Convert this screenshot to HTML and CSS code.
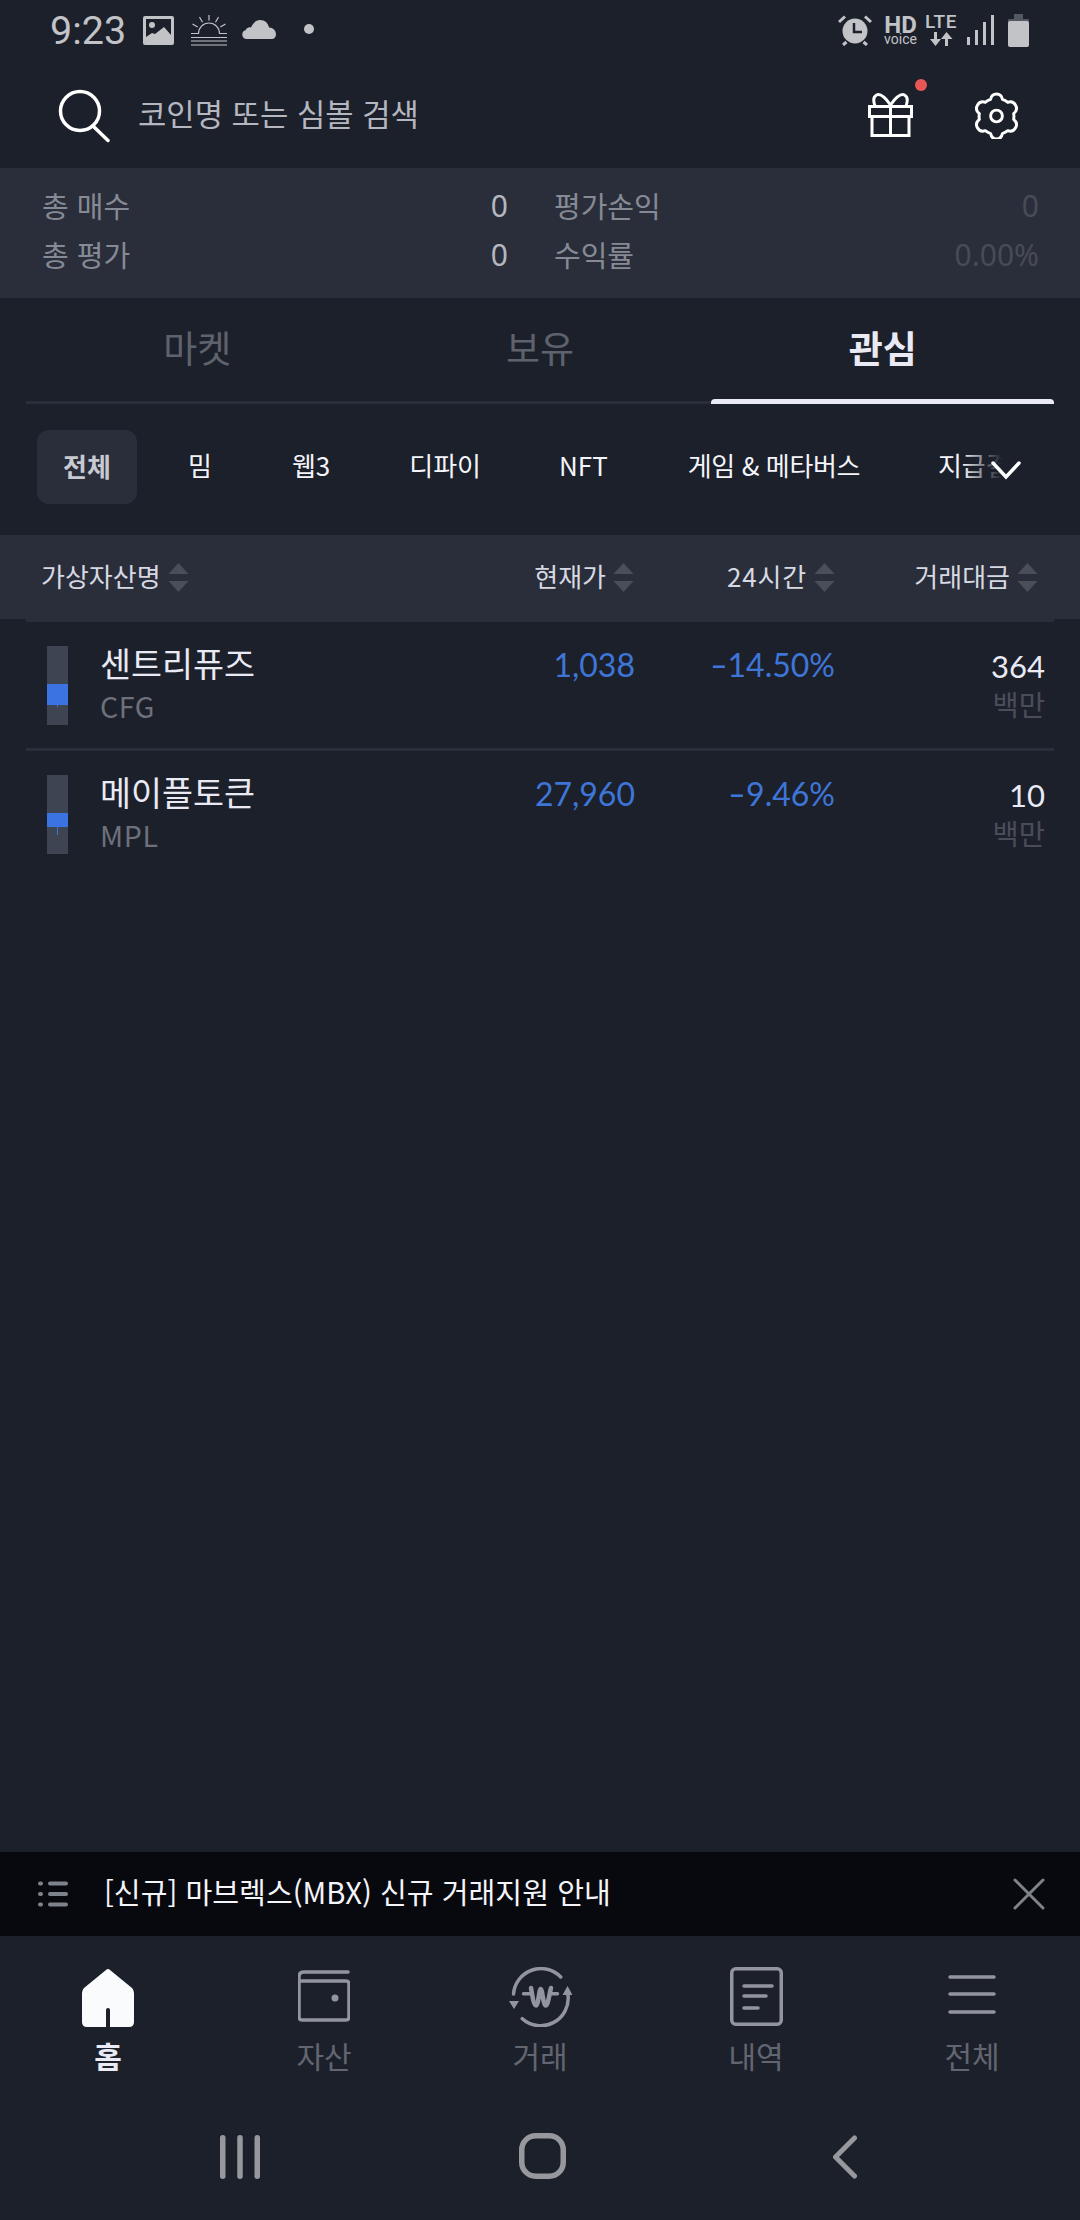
FILE: index.html
```html
<!DOCTYPE html>
<html lang="ko">
<head>
<meta charset="utf-8">
<title>관심</title>
<link rel="stylesheet" href="styles.css">
</head>
<body>
<div class="app">
  <div class="status">
    <span class="time">9:23</span>
    <svg class="st-img" viewBox="0 0 31 29"><rect width="31" height="29" rx="2" fill="#c2c3c7"/><rect x="3" y="3" width="25" height="23" fill="#1c202b"/><circle cx="9" cy="9" r="3" fill="#c2c3c7"/><path d="M3 21l6-4 3 1 9-7 7 8v7H3z" fill="#c2c3c7"/></svg>
    <svg class="st-sun" viewBox="0 0 36 31" stroke="#c2c3c7" stroke-width="1.200" fill="none"><path d="M0 18.500h7.500A10.500 10.500 0 0 1 28.500 18.500H36M18 5.500V0M11.500 7.200 8.500 2M24.500 7.200 27.500 2M6.700 12 1.500 9M29.300 12 34.500 9M0 22.500h36M0 26h36M0 30h36"/></svg>
    <svg class="st-cloud" viewBox="0 0 34 19"><path d="M4.500 19A4.500 4.500 0 0 1 3.500 10.200C5 7.500 7 7 9 7.500 11 3 14 0 18 0c5 0 8 3 9 7.500 4 0 7 3 7 7 0 2.500-2 4.500-4 4.500z" fill="#c2c3c7"/></svg>
    <span class="st-dot"></span>
    <span class="spacer"></span>
    <svg class="st-alarm" viewBox="0 0 34 31"><circle cx="17" cy="16" r="12.500" fill="#c2c3c7"/><path d="M16 8v9h8" fill="none" stroke="#1c202b" stroke-width="2.500"/><path d="M1 7 7 1.500M33 7l-6-5.500M5 30l3.500-3M29 30l-3.500-3" stroke="#c2c3c7" stroke-width="3"/></svg>
    <span class="st-hd"><b>HD</b><i>voice</i></span>
    <span class="st-lte"><b>LTE</b>
      <svg viewBox="0 0 24 14" width="24" height="14" fill="#c2c3c7"><path d="M5 0h3v7h4l-5.500 7L1 7h4zM17.500 0l6 7h-4.500v7h-3V7h-4z"/></svg>
    </span>
    <svg class="st-sig" viewBox="0 0 27 30" fill="#c2c3c7"><rect x="0" y="22" width="3" height="8"/><rect x="8" y="15" width="3" height="15"/><rect x="16" y="7" width="3" height="23"/><rect x="24" y="0" width="3" height="30"/></svg>
    <svg class="st-bat" viewBox="0 0 21 33"><rect x="6" width="9" height="6" fill="#555862"/><rect y="5" width="21" height="3" rx="1" fill="#555862"/><rect y="7" width="21" height="26" rx="2" fill="#c2c3c7"/></svg>
  </div>

  <header class="search">
    <svg class="i-search" viewBox="0 0 52 54" fill="none" stroke="#fff" stroke-width="3.500" stroke-linecap="round"><circle cx="22" cy="22" r="19.500"/><path d="M35 37l15 14.500"/></svg>
    <span class="search-text">코인명 또는 심볼 검색</span>
    <span class="gift-wrap">
      <svg class="i-gift" viewBox="0 0 45 44" fill="none" stroke="#fff" stroke-width="3"><path d="M1.500 13.500h42v10H1.500zM4 23.500v19h37v-19M22.500 13.500v29M22.500 12C19 7 13 0 8.500 2 5 4 5.500 9 7 13M22.500 12c3.500-5 9.500-12 14-10 3.500 2 3 7 1.500 11"/></svg>
      <span class="red-dot"></span>
    </span>
    <svg class="i-gear" viewBox="0 0 44 48" fill="none" stroke="#fff" stroke-width="3" stroke-linejoin="round"><path d="M22 2c3.500 0 5.500 2.500 6 5.500 3 1 3 1 5.500 3 3-1 6-.5 8 3s.5 6.500-2 8.500c.5 2.500.5 3.500 0 6 2.500 2 4 5 2 8.500s-5 4-8 3c-2.500 2-2.500 2-5.500 3-.5 3-2.500 5.500-6 5.500s-5.500-2.500-6-5.500c-3-1-3-1-5.500-3-3 1-6 .5-8-3s-.5-6.500 2-8.500c-.5-2.500-.5-3.500 0-6-2.500-2-4-5-2-8.500s5-4 8-3c2.500-2 2.500-2 5.500-3C16.500 4.500 18.500 2 22 2z"/><circle cx="22" cy="24.500" r="6"/></svg>
  </header>

  <section class="summary">
    <div class="sum-col sum-left">
      <div class="sum-row"><span class="sum-label">총 매수</span><span class="sum-val">0</span></div>
      <div class="sum-row"><span class="sum-label">총 평가</span><span class="sum-val">0</span></div>
    </div>
    <div class="sum-col sum-right">
      <div class="sum-row"><span class="sum-label">평가손익</span><span class="sum-val dim">0</span></div>
      <div class="sum-row"><span class="sum-label">수익률</span><span class="sum-val dim">0.00%</span></div>
    </div>
  </section>

  <nav class="tabs">
    <span class="tab">마켓</span>
    <span class="tab">보유</span>
    <span class="tab on">관심</span>
  </nav>

  <div class="chips">
    <span class="chip on">전체</span>
    <span class="chip c-mim">밈</span>
    <span class="chip c-web">웹3</span>
    <span class="chip c-defi">디파이</span>
    <span class="chip c-nft">NFT</span>
    <span class="chip c-game">게임 &amp; 메타버스</span>
    <span class="chip c-pay">지급결제</span>
    <span class="chip-fade"></span>
    <svg class="chev" viewBox="0 0 30 20" fill="none" stroke="#fff" stroke-width="3.500" stroke-linecap="round"><path d="M2 3l13 14L28 3"/></svg>
  </div>

  <div class="thead">
    <span class="th th-name">가상자산명<svg class="sort" viewBox="0 0 20 29"><path d="M10 0l10 11H0zM10 29L0 18h20z"/></svg></span>
    <span class="th th-price">현재가<svg class="sort" viewBox="0 0 20 29"><path d="M10 0l10 11H0zM10 29L0 18h20z"/></svg></span>
    <span class="th th-chg">24시간<svg class="sort" viewBox="0 0 20 29"><path d="M10 0l10 11H0zM10 29L0 18h20z"/></svg></span>
    <span class="th th-vol">거래대금<svg class="sort" viewBox="0 0 20 29"><path d="M10 0l10 11H0zM10 29L0 18h20z"/></svg></span>
  </div>

  <div class="list">
    <div class="row">
      <div class="candle"><span class="body b1"></span><span class="wick w1"></span></div>
      <div class="coin"><div class="coin-name">센트리퓨즈</div><div class="coin-sym">CFG</div></div>
      <div class="num price">1,038</div>
      <div class="num chg"><span class="minus">-</span>14.50%</div>
      <div class="vol"><div class="vol-n">364</div><div class="vol-u">백만</div></div>
    </div>
    <div class="row last">
      <div class="candle"><span class="body b2"></span><span class="wick w2"></span></div>
      <div class="coin"><div class="coin-name">메이플토큰</div><div class="coin-sym">MPL</div></div>
      <div class="num price">27,960</div>
      <div class="num chg"><span class="minus">-</span>9.46%</div>
      <div class="vol"><div class="vol-n">10</div><div class="vol-u">백만</div></div>
    </div>
  </div>

  <div class="notice">
    <svg class="i-list" viewBox="0 0 30 26" stroke="#7e828b" stroke-width="4" stroke-linecap="round"><path d="M2 2.500h1M2 13h1M2 23.500h1M12 2.500h16M12 13h16M12 23.500h16"/></svg>
    <span class="notice-text">[신규] 마브렉스(MBX) 신규 거래지원 안내</span>
    <svg class="i-x" viewBox="0 0 32 32" stroke="#7e828b" stroke-width="3" stroke-linecap="round"><path d="M2 2l28 28M30 2L2 30"/></svg>
  </div>

  <nav class="bottom">
    <div class="nav on">
      <svg viewBox="0 0 52 58"><path d="M26 0Q27 0 28 1L50 19Q52 21 52 24V53Q52 58 47 58H28V41Q28 39 26 39Q24 39 24 41V58H5Q0 58 0 53V24Q0 21 2 19L24 1Q25 0 26 0Z" fill="#fafbfd"/></svg>
      <span>홈</span>
    </div>
    <div class="nav">
      <svg viewBox="0 0 52 58" fill="none" stroke="#92959f" stroke-width="3.500" stroke-linejoin="round" stroke-linecap="round"><path d="M50 3H6Q1 3 1 8V12M1 12h47q3 0 3 3v33q0 3-3 3H4q-3 0-3-3z"/><circle cx="37" cy="29" r="3.500" fill="#92959f" stroke="none"/></svg>
      <span>자산</span>
    </div>
    <div class="nav n-trade">
      <svg viewBox="0 0 63 60" fill="none" stroke="#92959f" stroke-width="3.500" stroke-linejoin="round" stroke-linecap="round"><path d="M51.700 10A27.500 27.500 0 0 0 4.500 27M13.300 51.700A27.500 27.500 0 0 0 59 28"/><path d="M5 42 0 34h10zM58.500 19l5 9h-10z" fill="#92959f" stroke="none"/><path d="M14.500 26.700h8M41 26.700h7.500" stroke-width="3.500"/><path d="M22 21c1 5 2.500 17.500 5 17.500S30 22 31.700 22s2.500 16.500 5 16.500S40.500 26 42 21" stroke-width="4.500"/></svg>
      <span>거래</span>
    </div>
    <div class="nav n-hist">
      <svg viewBox="0 0 53 59" fill="none" stroke="#92959f" stroke-width="3.500" stroke-linecap="round"><rect x="1.750" y="1.750" width="49.500" height="55.500" rx="4"/><path d="M14 19h28M14 29h22M14 41h14"/></svg>
      <span>내역</span>
    </div>
    <div class="nav">
      <svg viewBox="0 0 52 58" fill="none" stroke="#92959f" stroke-width="3.500" stroke-linecap="round"><path d="M4 8h44M4 25h44M4 43h44"/></svg>
      <span>전체</span>
    </div>
  </nav>

  <div class="sysbar">
    <svg class="sys-recent" viewBox="0 0 40 44" fill="#97989d"><rect width="5.500" height="44" rx="2.700" x="0"/><rect width="5.500" height="44" rx="2.700" x="17.250"/><rect width="5.500" height="44" rx="2.700" x="34.500"/></svg>
    <svg class="sys-home" viewBox="0 0 47 46" fill="none" stroke="#97989d" stroke-width="5.500"><rect x="2.750" y="2.750" width="41.500" height="40.500" rx="14"/></svg>
    <svg class="sys-back" viewBox="0 0 24 44" fill="none" stroke="#97989d" stroke-width="5" stroke-linecap="round" stroke-linejoin="round"><path d="M21.500 3 2.500 22l19 19"/></svg>
  </div>
</div>
</body>
</html>
```

FILE: styles.css
```css
* { box-sizing: border-box; }
html, body { margin: 0; padding: 0; background: #1c202b; }
body { font-family: "Noto Sans CJK KR", "Noto Sans", sans-serif; }
.app { width: 1080px; height: 2220px; display: flex; flex-direction: column; overflow: hidden; color: #fff; background: #1c202b; }

/* status */
.status { height: 58px; flex: none; display: flex; align-items: center; padding: 0 51px 0 50px; }
.status svg { display: block; flex: none; }
.time { font-family: Roboto, sans-serif; font-size: 39.500px; color: #c2c3c7; width: 93px; line-height: 1; margin-top: 3px; flex: none; }
.st-img { width: 31px; height: 29px; margin-top: 3px; }
.st-sun { width: 36px; height: 31px; margin-left: 17px; margin-top: 3px; }
.st-cloud { width: 34px; height: 19px; margin-left: 15px; margin-top: 1px; }
.st-dot { width: 10px; height: 10px; border-radius: 50%; background: #c2c3c7; margin-left: 28px; }
.spacer { flex: 1; }
.st-alarm { width: 34px; height: 31px; margin-top: 3px; }
.st-hd { width: 33px; margin-left: 12px; display: flex; flex-direction: column; align-items: center; color: #c2c3c7; font-family: Roboto, sans-serif; margin-top: 3px; flex: none; }
.st-hd b { font-size: 24px; line-height: 17px; }
.st-hd i { font-style: normal; font-size: 14px; line-height: 11px; }
.st-lte { width: 30px; margin-left: 9px; display: flex; flex-direction: column; align-items: center; gap: 3px; color: #c2c3c7; font-family: Roboto, sans-serif; margin-top: 2px; flex: none; }
.st-lte b { font-size: 19px; font-weight: 500; line-height: 15px; letter-spacing: .6px; }
.st-sig { width: 27px; height: 30px; margin-left: 11px; margin-top: 2px; }
.st-bat { width: 21px; height: 33px; margin-left: 14px; margin-top: 3px; }

/* search */
.search { height: 110px; flex: none; display: flex; align-items: center; padding: 0 61px 0 58px; }
.i-search { width: 52px; height: 54px; flex: none; margin-top: 6px; }
.search-text { font-size: 30.800px; color: #b4b7c0; margin-left: 28px; flex: 1; line-height: 1; }
.gift-wrap { position: relative; width: 45px; height: 44px; margin-top: 4px; flex: none; }
.i-gift { width: 45px; height: 44px; display: block; }
.red-dot { position: absolute; left: 47px; top: -14px; width: 12px; height: 12px; border-radius: 50%; background: #e85656; }
.i-gear { width: 45px; height: 47px; margin-left: 61px; flex: none; margin-top: 4px; }

/* summary */
.summary { height: 130px; flex: none; background: #2a2e3a; display: flex; padding: 13px 41px 0 42px; }
.sum-col { display: flex; flex-direction: column; }
.sum-left { width: 466px; }
.sum-right { flex: 1; padding-left: 46px; }
.sum-row { display: flex; justify-content: space-between; align-items: center; height: 49px; font-size: 29px; line-height: 1; }
.sum-label { color: #868a95; }
.sum-val { font-family: "Noto Sans", sans-serif; color: #b4b7c0; font-size: 30px; }
.sum-val.dim { color: #474b56; }

/* tabs */
.tabs { height: 106px; flex: none; margin: 0 26px; display: flex; border-bottom: 3px solid #2a2e3a; position: relative; }
.tab { flex: 1; display: flex; align-items: center; justify-content: center; font-size: 37px; color: #5e626d; padding-bottom: 4px; line-height: 1; }
.tab.on { color: #e9eaf4; font-weight: 700; position: relative; }
.tab.on::after { content: ""; position: absolute; left: 0; right: 0; bottom: -3px; height: 5px; background: #e9eaf4; border-radius: 4px 4px 0 0; }

/* chips */
.chips { height: 131px; flex: none; position: relative; display: flex; align-items: center; padding: 0 0 5px 37px; font-size: 26px; color: #f4f5fa; white-space: nowrap; overflow: hidden; }
.chip { line-height: 1; flex: none; margin-bottom: 4px; }
.chip.on { width: 100px; height: 74px; margin-bottom: 0; padding-bottom: 2px; background: #2a2e3a; border-radius: 12px; display: flex; align-items: center; justify-content: center; font-weight: 700; color: #c8cad2; }
.c-mim { margin-left: 51px; }
.c-web { margin-left: 80px; }
.c-defi { margin-left: 79px; }
.c-nft { margin-left: 78px; }
.c-game { margin-left: 80px; letter-spacing: -.4px; }
.c-pay { margin-left: 78px; }
.chip-fade { position: absolute; left: 962px; right: 0; top: 30px; height: 70px; background: linear-gradient(90deg, rgba(28,32,43,0), #1c202b 40px); }
.chev { position: absolute; left: 991px; top: 56px; width: 30px; height: 20px; }

/* table head */
.thead { height: 84px; flex: none; background: #2a2e3a; display: flex; align-items: center; padding-right: 42px; font-size: 26px; color: #d7d9e2; }
.th { display: flex; align-items: center; gap: 7px; line-height: 1; flex: none; justify-content: flex-end; padding-bottom: 2px; }
.th-name { flex: 1; justify-content: flex-start; padding-left: 41px; }
.th-chg { width: 201px; letter-spacing: .8px; }
.th-vol { width: 203px; }
.sort { width: 21px; height: 29px; fill: #4a4e59; display: block; flex: none; margin-top: 2px; }

/* rows */
.list { flex: 1; margin: 0 26px; border-top: 3px solid #2a2e3a; }
.row { height: 129px; border-bottom: 3px solid #2a2e3a; position: relative; }
.row.last { border-bottom: 0; }
.candle { position: absolute; left: 21px; top: 24px; width: 21px; height: 79px; background: #3f4452; }
.body { position: absolute; left: 0; width: 21px; background: #3b74e2; }
.wick { position: absolute; left: 10px; width: 1px; background: #3b74e2; }
.b1 { top: 38px; height: 21px; }
.w1 { top: 59px; height: 2px; }
.b2 { top: 38px; height: 14px; }
.w2 { top: 52px; height: 8px; }
.coin { position: absolute; left: 74px; top: 19px; }
.coin-name { font-size: 33.700px; line-height: 44px; color: #e9eaf4; }
.coin-sym { font-size: 28.500px; line-height: 36px; color: #6e717b; margin-top: 3px; letter-spacing: .6px; }
.num { position: absolute; top: 21px; font-family: Lato, sans-serif; font-size: 32px; line-height: 44px; color: #3e76d8; text-align: right; }
.minus { display: inline-block; margin-right: 3px; transform: scaleX(1.5); transform-origin: center; }
.price { right: 419px; }
.chg { right: 219px; }
.vol { position: absolute; right: 9px; top: 23px; text-align: right; }
.vol-n { font-family: Lato, sans-serif; font-size: 31px; line-height: 42px; color: #e9eaf4; }
.vol-u { font-size: 28.500px; line-height: 32px; color: #4a4d58; margin-top: 1px; }

/* notice */
.notice { height: 84px; flex: none; background: #08090e; display: flex; align-items: center; padding: 0 35px 0 38px; }
.i-list { width: 30px; height: 26px; flex: none; }
.notice-text { flex: 1; font-size: 29.150px; color: #f4f5fa; margin-left: 36px; line-height: 1; padding-bottom: 4px; }
.i-x { width: 32px; height: 32px; flex: none; }

/* bottom nav */
.bottom { height: 184px; flex: none; display: flex; padding: 33px 0 0; }
.nav { width: 216px; display: flex; flex-direction: column; align-items: center; color: #626671; font-size: 30px; }
.nav svg { width: 52px; height: 58px; display: block; flex: none; }
.nav.n-trade svg { width: 63px; height: 60px; margin: -2px 0 0; }
.nav.n-hist svg { width: 53px; height: 59px; margin: -2px 0 1px; }
.nav span { margin-top: 10px; line-height: 36px; }
.nav.on { color: #e9eaf4; font-weight: 700; }

/* system bar */
.sysbar { flex: none; height: 100px; position: relative; }
.sysbar svg { position: absolute; display: block; }
.sys-recent { left: 220px; top: 15px; width: 40px; height: 44px; }
.sys-home { left: 519px; top: 13px; width: 47px; height: 46px; }
.sys-back { left: 833px; top: 15px; width: 24px; height: 44px; }
```
